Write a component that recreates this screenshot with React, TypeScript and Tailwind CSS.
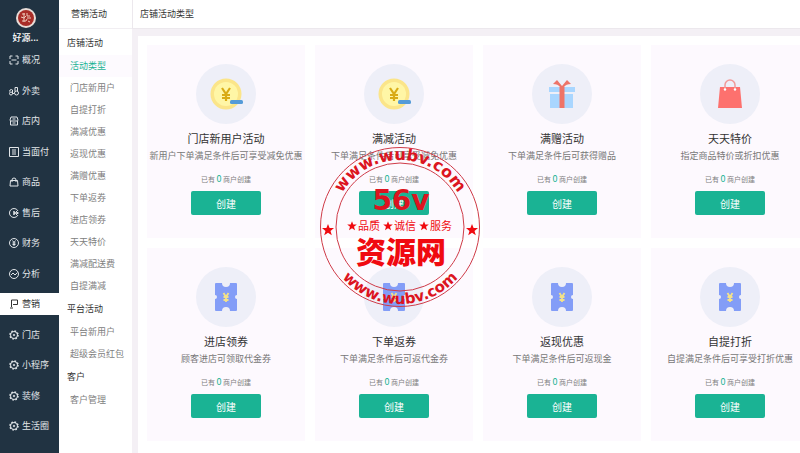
import type { ReactNode } from "react";

type IconName =
  | "scan"
  | "scooter"
  | "store"
  | "list"
  | "bag"
  | "service"
  | "money"
  | "chart"
  | "flag"
  | "gear";

const modules: { label: string; icon: IconName; active?: boolean }[] = [
  { label: "概况", icon: "scan" },
  { label: "外卖", icon: "scooter" },
  { label: "店内", icon: "store" },
  { label: "当面付", icon: "list" },
  { label: "商品", icon: "bag" },
  { label: "售后", icon: "service" },
  { label: "财务", icon: "money" },
  { label: "分析", icon: "chart" },
  { label: "营销", icon: "flag", active: true },
  { label: "门店", icon: "gear" },
  { label: "小程序", icon: "gear" },
  { label: "装修", icon: "gear" },
  { label: "生活圈", icon: "gear" },
];

const menu = [
  {
    title: "店铺活动",
    items: [
      "活动类型",
      "门店新用户",
      "自提打折",
      "满减优惠",
      "返现优惠",
      "满赠优惠",
      "下单返券",
      "进店领券",
      "天天特价",
      "满减配送费",
      "自提满减",
    ],
  },
  { title: "平台活动", items: ["平台新用户", "超级会员红包"] },
  { title: "客户", items: ["客户管理"] },
];

type Art = "coin" | "gift" | "shopping" | "ticket";

const activities: { title: string; desc: string; art: Art }[] = [
  { title: "门店新用户活动", desc: "新用户下单满足条件后可享受减免优惠", art: "coin" },
  { title: "满减活动", desc: "下单满足条件后可享受减免优惠", art: "coin" },
  { title: "满赠活动", desc: "下单满足条件后可获得赠品", art: "gift" },
  { title: "天天特价", desc: "指定商品特价或折扣优惠", art: "shopping" },
  { title: "进店领券", desc: "顾客进店可领取代金券", art: "ticket" },
  { title: "下单返券", desc: "下单满足条件后可返代金券", art: "ticket" },
  { title: "返现优惠", desc: "下单满足条件后可返现金", art: "ticket" },
  { title: "自提打折", desc: "自提满足条件后可享受打折优惠", art: "ticket" },
];

const iconPaths: Record<IconName, ReactNode> = {
  scan: <path d="M7 2H2v6M2 12v6h5M13 2h5v6M18 12v6h-5M5 10h10" />,
  scooter: (
    <>
      <circle cx="4" cy="15" r="3" />
      <circle cx="15" cy="14" r="4" />
      <path d="M1 11q0-4 4-4l2 1v7h3M12 11V3h5v8" />
    </>
  ),
  store: (
    <>
      <path d="M4 2h12l2 6q0 2-2 2H4q-2 0-2-2zM3 10v8h14v-8" />
      <path d="M7 14h6M7 6h6" />
    </>
  ),
  list: (
    <>
      <path d="M1 1h18v18H1z" />
      <path d="M6 6h8M6 10h8M6 14h8" />
    </>
  ),
  bag: (
    <>
      <path d="M3 7h14l1 11H2z" />
      <path d="M6 10V6q0-4 4-4t4 4v4" />
    </>
  ),
  service: (
    <>
      <path d="M18 14a9 9 0 1 1 0-8" />
      <path d="M10 6v8M10 10h9" strokeWidth="3" />
      <path d="m14 6 4 4-4 4" />
    </>
  ),
  money: (
    <>
      <circle cx="10" cy="10" r="9" />
      <path d="m7 5 3 4 3-4M10 9v7M7 10h6M7 13h6" />
    </>
  ),
  chart: (
    <>
      <circle cx="10" cy="10" r="9" />
      <path d="m4 12 4-4 4 4 5-5" />
    </>
  ),
  flag: <path d="M5 2h12v9H8M5 2v14M2 18h6" />,
  gear: (
    <>
      <circle cx="10" cy="10" r="7" strokeWidth="2" />
      <circle cx="10" cy="10" r="8" strokeWidth="3" strokeDasharray="3.14 3.14" />
      <circle cx="10" cy="10" r="1.500" />
    </>
  ),
};

function ModuleIcon({ name }: { name: IconName }) {
  return (
    <svg
      viewBox="0 0 20 20"
      className="size-[10px] shrink-0"
      fill="none"
      stroke="currentColor"
      strokeWidth="2"
      aria-hidden="true"
    >
      {iconPaths[name]}
    </svg>
  );
}

function Coin() {
  return (
    <svg viewBox="0 0 60 60" className="size-full" aria-hidden="true">
      <circle cx="30" cy="30" r="15.500" fill="#fbe58a" />
      <circle cx="30" cy="30" r="12" fill="#fff6a6" />
      <path
        d="m26 24 4 6 4-6M30 30v7M26 31h8M26 34h8"
        stroke="#d9ab14"
        strokeWidth="2.200"
        fill="none"
      />
      <rect x="34" y="36" width="13" height="4" rx="1.5" fill="#549bd8" />
    </svg>
  );
}

function Gift() {
  return (
    <svg viewBox="0 0 60 60" className="size-full" aria-hidden="true">
      <path d="M17 23h26v5H17zM18 30h23v14H18z" fill="#a9d6ff" />
      <path d="M27.500 23h5v21h-5z" fill="#ee7468" />
      <path d="M28 23q-2-3-7-3l4-4 5 6 5-6 4 4q-5 0-7 3z" fill="#ee7468" />
    </svg>
  );
}

function ShoppingBag() {
  return (
    <svg viewBox="0 0 60 60" className="size-full" aria-hidden="true">
      <path d="M20 23h20l2 21H18z" fill="#fd716e" />
      <path
        d="M25 25v-4a5 5 0 0 1 10 0v4"
        fill="none"
        stroke="#f29a98"
        strokeWidth="1.500"
      />
      <circle cx="25" cy="25.500" r="1.200" fill="#fff" />
      <circle cx="35" cy="25.500" r="1.200" fill="#fff" />
    </svg>
  );
}

function Ticket() {
  return (
    <svg viewBox="0 0 60 60" className="size-full" aria-hidden="true">
      <path
        d="M20 16h6a4 4 0 0 0 8 0h6q1 0 1 1v11a2 2 0 0 0 0 4v11q0 1-1 1h-6a4 4 0 0 0-8 0h-6q-1 0-1-1V32a2 2 0 0 0 0-4V17q0-1 1-1z"
        fill="#839df7"
      />
      <path
        d="m27.500 26 2.500 4 2.500-4M30 30v5M27.500 30h5M27.500 33h5"
        stroke="#f4e288"
        strokeWidth="1.800"
        fill="none"
      />
    </svg>
  );
}

const artwork: Record<Art, ReactNode> = {
  coin: <Coin />,
  gift: <Gift />,
  shopping: <ShoppingBag />,
  ticket: <Ticket />,
};

function Avatar() {
  return (
    <svg viewBox="0 0 20 20" className="size-5" role="img" aria-label="店铺头像">
      <circle cx="10" cy="10" r="10" fill="#e9ddd8" />
      <circle cx="10" cy="10" r="8" fill="#a92d28" />
      <path
        d="M6 6h3M11 5v3h3M5 9l3 1 2-2M11 10h4M6 13h4l1-2M12 13l2 1M8 5v9"
        stroke="#edc9b9"
        strokeWidth="1"
        fill="none"
      />
    </svg>
  );
}

const starPoints = "0,-6 1.600,-2 6,-2 2.500,0.900 3.800,5.300 0,2.700 -3.800,5.300 -2.500,0.900 -6,-2 -1.600,-2";

function Stamp() {
  return (
    <svg
      viewBox="-80 -80 160 160"
      className="pointer-events-none absolute left-[320px] top-[147px] size-[160px] overflow-visible fill-[#f00a10]"
    >
      <defs>
        <path id="arc-top" d="M-67 0A67 67 0 0 1 67 0" />
        <path id="arc-bottom" d="M-77 0A77 77 0 0 0 77 0" />
      </defs>
      <circle r="79.500" fill="none" stroke="#cf3b48" />
      <circle r="64" fill="none" stroke="#cf3b48" />
      <g className="font-['DejaVu_Sans'] font-bold" textAnchor="middle">
        <text fontSize="16" fill="#dc1420">
          <textPath href="#arc-top" startOffset="50%">
            www.wubv.com
          </textPath>
        </text>
        <text fontSize="15" fill="#dc1420">
          <textPath href="#arc-bottom" startOffset="50%">
            www.wubv.com
          </textPath>
        </text>
        <text x="1" y="-17" fontSize="28" fill="#dc1420">
          56v
        </text>
      </g>
      <polygon points={starPoints} transform="translate(-72 3)" />
      <polygon points={starPoints} transform="translate(72 3)" />
      <g className="font-['Noto_Sans_CJK_SC']">
        {["品质", "诚信", "服务"].map((word, i) => (
          <g key={word} transform={`translate(${i * 36 - 48} 0)`}>
            <polygon points={starPoints} transform="translate(0 -1) scale(0.800)" />
            <text x="6" y="3" fontSize="11">
              {word}
            </text>
          </g>
        ))}
        <text x="1" y="36" fontSize="30" fontWeight="900" textAnchor="middle">
          资源网
        </text>
      </g>
    </svg>
  );
}

function ActivityCard({ title, desc, art }: { title: string; desc: string; art: Art }) {
  return (
    <article className="flex h-[193px] flex-col items-center bg-[#fdf9fe] pt-[19px]">
      <div className="size-[60px] rounded-full bg-[#eeeff8]">{artwork[art]}</div>
      <h2 className="mt-1.5 text-[11px] leading-4 text-[#333]">{title}</h2>
      <p className="mt-1 whitespace-nowrap text-[9px] leading-3 text-[#777]">{desc}</p>
      <p className="mt-[11px] text-[7px] leading-3 text-[#808080]">
        已有 <span className="text-[9px] text-[#1ab394]">0</span> 商户创建
      </p>
      <button
        type="button"
        className="mt-1.5 h-6 w-[70px] rounded-xs bg-[#1ab394] text-[10px] text-white"
      >
        创建
      </button>
    </article>
  );
}

export default function App() {
  return (
    <div className="relative flex h-screen overflow-hidden bg-white font-['Noto_Sans_CJK_SC',sans-serif] text-[9px]">
      <aside className="flex w-[59px] shrink-0 flex-col bg-[#213342] pb-4 text-[#e2e6e9]">
        <div className="flex h-[49px] flex-col items-center gap-1 pr-2 pt-2">
          <Avatar />
          <span className="leading-3 font-medium text-white">好源...</span>
        </div>
        <nav className="flex flex-1 flex-col justify-between">
          {modules.map(({ label, icon, active }) => (
            <a
              key={label}
              href="#"
              className={
                active
                  ? "flex h-[22px] items-center gap-[3px] bg-white pl-[9px] text-[#333]"
                  : "flex h-[22px] items-center gap-[3px] pl-[9px]"
              }
            >
              <ModuleIcon name={icon} />
              {label}
            </a>
          ))}
        </nav>
      </aside>

      <aside className="w-[73px] shrink-0 bg-white">
        <h1 className="h-[29px] border-b border-[#f1eef2] pl-3 leading-7 text-[#333]">
          营销活动
        </h1>
        <nav className="pt-[2px]">
          {menu.map((group) => (
            <section key={group.title}>
              <h2 className="pl-2 leading-6 text-[#333]">{group.title}</h2>
              <ul>
                {group.items.map((item) => (
                  <li key={item}>
                    <a
                      href="#"
                      className={
                        item === "活动类型"
                          ? "block whitespace-nowrap bg-[#fdfafe] pl-[11px] leading-[22px] text-[#1ab394]"
                          : "block whitespace-nowrap pl-[11px] leading-[22px] text-[#808080]"
                      }
                    >
                      {item}
                    </a>
                  </li>
                ))}
              </ul>
            </section>
          ))}
        </nav>
      </aside>

      <div className="flex min-w-0 flex-1 flex-col bg-[#f4f0f5]">
        <header className="h-[29px] shrink-0 border-b border-l border-[#ece8ed] bg-white pl-[7px] leading-7 text-[#333]">
          店铺活动类型
        </header>
        <main className="flex-1 overflow-hidden pl-1.5 pt-[7px]">
          <div className="h-full bg-white p-[9px]">
            <div className="grid min-w-[662px] grid-cols-4 gap-[10px]">
              {activities.map((activity) => (
                <ActivityCard key={activity.title} {...activity} />
              ))}
            </div>
          </div>
        </main>
      </div>

      <Stamp />
    </div>
  );
}
